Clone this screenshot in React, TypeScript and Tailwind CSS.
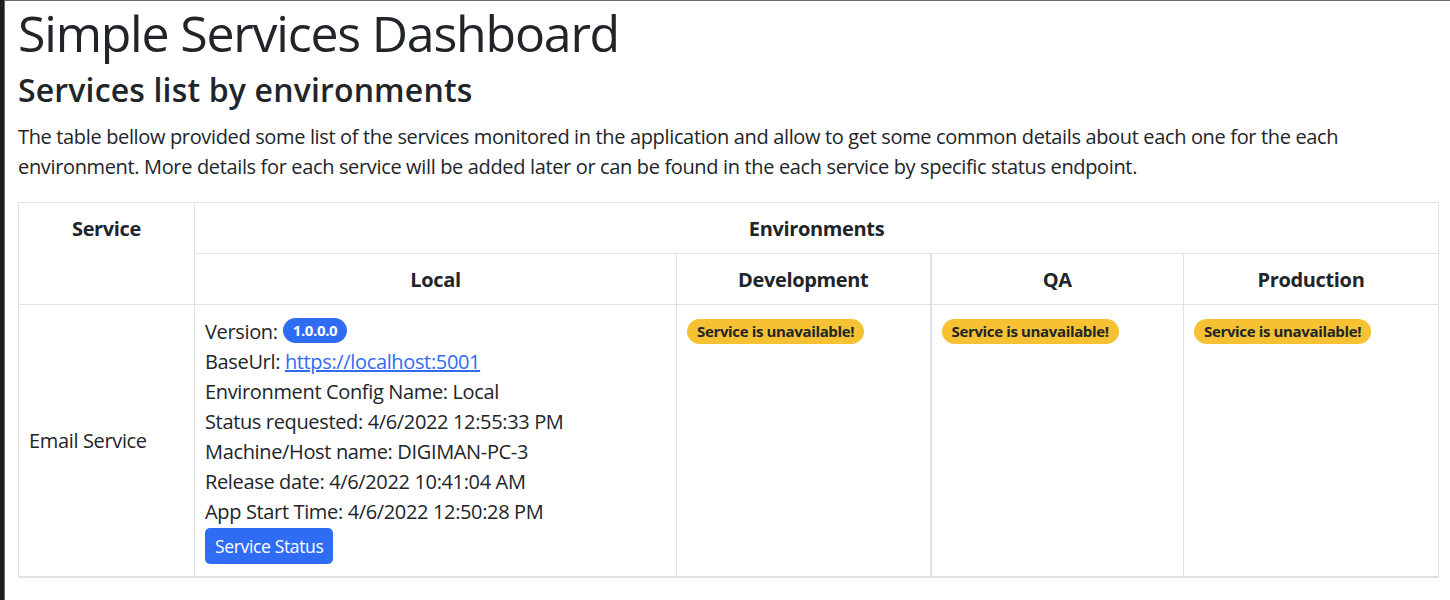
import React from "react";

const FONT = "font-['Open_Sans','Noto_Sans',sans-serif] tracking-[-0.022em]";

const DETAILS = [
  "Environment Config Name: Local",
  "Status requested: 4/6/2022 12:55:33 PM",
  "Machine/Host name: DIGIMAN-PC-3",
  "Release date: 4/6/2022 10:41:04 AM",
  "App Start Time: 4/6/2022 12:50:28 PM",
];

const TH = "border border-[#dee2e6] px-[10px] pb-[9px] pt-[11px] text-center font-bold";

function Unavailable() {
  return (
    <span className="inline-block rounded-full bg-[#f6c233] px-[10px] py-[5px] text-[15px] font-bold leading-[15px] text-[#212529]">
      Service is unavailable!
    </span>
  );
}

export default function App() {
  return (
    <div className={`flex min-h-[600px] bg-white text-[#212529] ${FONT}`}>
      {/* dark window edge on the left */}
      <div className="w-[4px] shrink-0 bg-[#1e1e1e]" />
      <main className="flex-1 border-l border-t border-[#6b6b6b] pl-[13px] pr-[11px] pt-[2px]">
        <h1 className="mb-[8px] text-[50px] leading-[60px] tracking-[-0.024em]">Simple Services Dashboard</h1>
        <h2 className="mb-[13px] text-[32px] leading-[38px] font-semibold tracking-[0.005em]">Services list by environments</h2>
        <p className="mb-[20px] text-[20px] leading-[30px]">
          The table bellow provided some list of the services monitored in the application and allow to get some common details about each one for the each environment. More details for each service will be added later or can be found in the each service by specific status endpoint.
        </p>

        <table className="w-[1420px] table-fixed border-collapse border border-[#dee2e6] text-[20px] leading-[30px]">
          <colgroup>
            <col className="w-[176px]" />
            <col className="w-[482px]" />
            <col className="w-[254px]" />
            <col className="w-[253px]" />
            <col className="w-[255px]" />
          </colgroup>
          <thead>
            <tr>
              <th rowSpan={2} className={`${TH} align-top`}>
                Service
              </th>
              <th colSpan={4} className={TH}>
                Environments
              </th>
            </tr>
            <tr>
              <th className={TH}>Local</th>
              <th className={TH}>Development</th>
              <th className={`${TH} border-l-2`}>QA</th>
              <th className={TH}>Production</th>
            </tr>
          </thead>
          <tbody>
            <tr className="border-b-2 border-[#dee2e6]">
              <td className="border border-[#dee2e6] p-[10px] align-middle">Email Service</td>
              <td className="border border-[#dee2e6] px-[10px] pb-[10px] pt-[12px] align-top">
                <div className="flex h-[30px] items-center gap-[5px]">
                  Version:
                  <span className="mb-[4px] rounded-full bg-[#2e6cf4] px-[10px] py-[5px] text-[15px] font-bold leading-[15px] text-white">
                    1.0.0.0
                  </span>
                </div>
                <div className="h-[30px]">
                  BaseUrl:{" "}
                  <a href="#" className="text-[#2e6cf4] underline">
                    https://localhost:5001
                  </a>
                </div>
                {DETAILS.map((line) => (
                  <div key={line} className="h-[30px]">
                    {line}
                  </div>
                ))}
                <button className="mb-[2px] mt-[1px] block h-[36px] rounded-[5px] bg-[#2e6cf4] px-[10px] text-[17.5px] leading-[26px] text-white">
                  Service Status
                </button>
              </td>
              <td className="border border-[#dee2e6] p-[10px] align-top">
                <Unavailable />
              </td>
              <td className="border border-[#dee2e6] border-l-2 p-[10px] align-top">
                <Unavailable />
              </td>
              <td className="border border-[#dee2e6] p-[10px] align-top">
                <Unavailable />
              </td>
            </tr>
          </tbody>
        </table>
      </main>
    </div>
  );
}
